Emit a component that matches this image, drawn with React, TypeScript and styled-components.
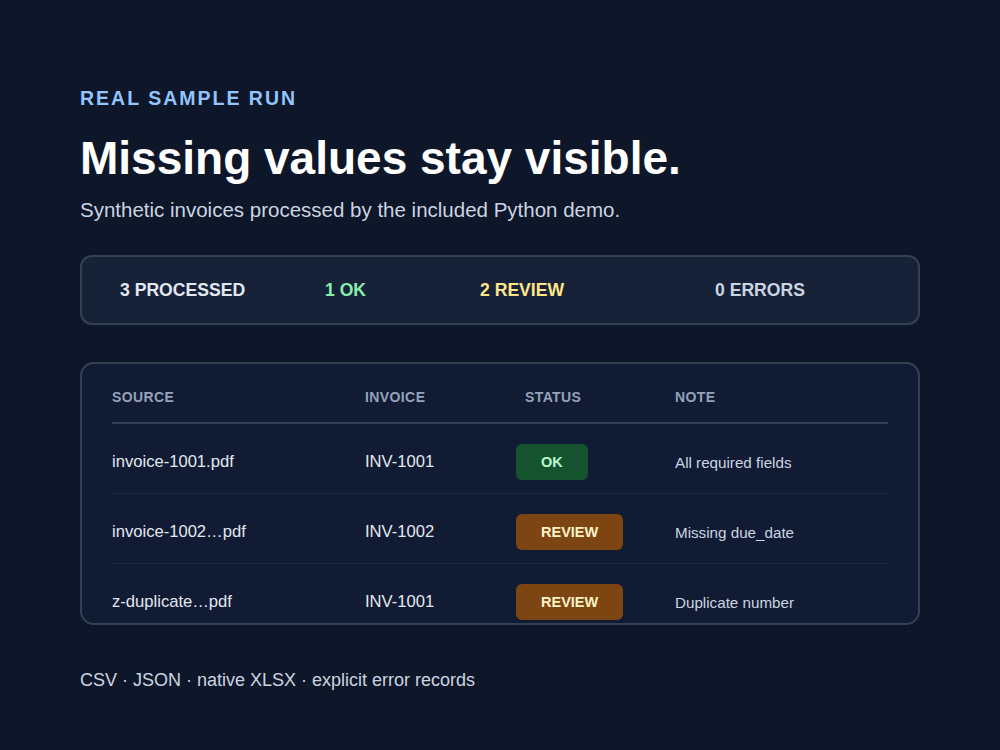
import React from "react";
import styled, { createGlobalStyle } from "styled-components";

const Global = createGlobalStyle`
  html, body { margin: 0; background: #0e1629; }
  body { font-family: "Liberation Sans", Arial, sans-serif; }
`;

const Page = styled.div`
  width: 1000px; height: 750px; box-sizing: border-box;
  padding: 86px 80px 0; background: #0e1629; color: #fff;
  display: flex; flex-direction: column;
`;
const Eyebrow = styled.div`
  font-size: 19.5px; font-weight: 700; letter-spacing: 2px; color: #93c5fd; line-height: 24px;
`;
const Title = styled.h1`
  margin: 20px 0 0; font-size: 46px; line-height: 56px; font-weight: 700; color: #fff;
`;
const Sub = styled.p`
  margin: 11px 0 0; font-size: 20.5px; line-height: 26px; color: #cbd5e1;
`;
const Summary = styled.div`
  margin-top: 32px; height: 70px; box-sizing: border-box;
  border: 2px solid #334155; border-radius: 12px; background: #172239;
  display: grid; grid-template-columns: 205px 155px 235px auto;
  align-items: center; padding-left: 38px;
  font-size: 17.6px; font-weight: 700;
`;
const Stat = styled.div<{ $c: string }>` color: ${p => p.$c}; `;
const Card = styled.div`
  margin-top: 37px; height: 263px; box-sizing: border-box;
  border: 2px solid #334155; border-radius: 14px; background: #111b33;
  padding: 0 30px; overflow: hidden; flex-shrink: 0;
`;
const Row = styled.div<{ $head?: boolean }>`
  display: grid; grid-template-columns: 253px 151px 159px auto;
  align-items: center; height: ${p => (p.$head ? "60px" : "70px")};
  border-bottom: ${p => (p.$head ? "2px solid #334155" : "1px solid #1e2a42")};
  box-sizing: border-box;
  padding-top: ${p => (p.$head ? "8px" : "7px")};
`;
const Head = styled.div<{ $pad?: number }>`
  font-size: 14px; font-weight: 700; color: #94a3b8; letter-spacing: 0.4px;
  padding-left: ${p => p.$pad || 0}px;
`;
const Cell = styled.div<{ $small?: boolean }>`
  font-size: ${p => (p.$small ? "15.2px" : "16.6px")}; color: ${p => (p.$small ? "#cbd5e1" : "#e2e8f0")};
`;
const Badge = styled.span<{ $ok?: boolean }>`
  display: inline-flex; align-items: center; justify-content: center;
  height: 36px; padding: 0 25px; border-radius: 6px; font-size: 14.5px; font-weight: 700;
  background: ${p => (p.$ok ? "#14532d" : "#7c4512")};
  color: ${p => (p.$ok ? "#bbf7d0" : "#fef3c7")};
`;
const Foot = styled.div`
  margin-top: 44px; font-size: 18px; line-height: 22px; color: #cbd5e1;
`;

const rows = [
  ["invoice-1001.pdf", "INV-1001", true, "All required fields"],
  ["invoice-1002…pdf", "INV-1002", false, "Missing due_date"],
  ["z-duplicate…pdf", "INV-1001", false, "Duplicate number"],
] as const;

export default function App() {
  return (
    <Page>
      <Global />
      <Eyebrow>REAL SAMPLE RUN</Eyebrow>
      <Title>Missing values stay visible.</Title>
      <Sub>Synthetic invoices processed by the included Python demo.</Sub>
      <Summary>
        <Stat $c="#e2e8f0">3 PROCESSED</Stat>
        <Stat $c="#86efac">1 OK</Stat>
        <Stat $c="#fde68a">2 REVIEW</Stat>
        <Stat $c="#cbd5e1">0 ERRORS</Stat>
      </Summary>
      <Card>
        <Row $head>
          <Head>SOURCE</Head>
          <Head>INVOICE</Head>
          <Head $pad={9}>STATUS</Head>
          <Head>NOTE</Head>
        </Row>
        {rows.map((r, i) => (
          <Row key={i}>
            <Cell>{r[0]}</Cell>
            <Cell>{r[1]}</Cell>
            <div><Badge $ok={r[2]}>{r[2] ? "OK" : "REVIEW"}</Badge></div>
            <Cell $small>{r[3]}</Cell>
          </Row>
        ))}
      </Card>
      <Foot>CSV · JSON · native XLSX · explicit error records</Foot>
    </Page>
  );
}
